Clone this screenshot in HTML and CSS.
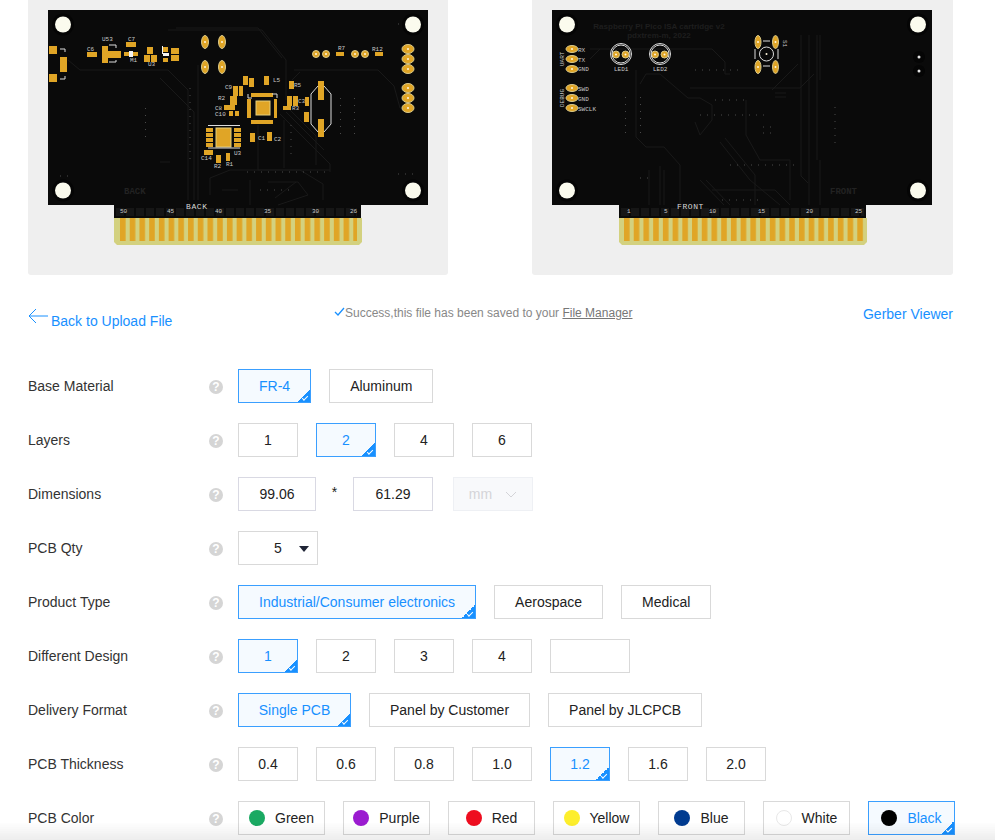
FILE: index.html
```html
<!DOCTYPE html>
<html lang="en">
<head>
  <meta charset="UTF-8">
  <title>PCB Quote</title>
  <link rel="stylesheet" href="styles.css">
</head>
<body>
  <div class="previews">
    <div class="preview">
      <svg class="pcb" viewBox="28 0 420 275" width="420" height="275">
        <defs>
          <pattern id="fingers-back" x="120" y="0" width="9.72" height="40" patternUnits="userSpaceOnUse">
            <rect x="0" y="0" width="5.6" height="40" class="gold"/>
          </pattern>
        </defs>
        <path class="board" d="M48 10H428V205H361V218H114V205H48Z"/>
        <path class="finger-base" d="M114 218H362V242L359 245H117L114 242Z"/>
        <rect x="120" y="218" width="237" height="23" fill="url(#fingers-back)"/>
        <path class="stripe" d="M116 212H357"/>

        <g class="trace">
          <path d="M68 60L80 70H168L188 90V200"/>
          <path d="M160 78L194 112V200"/>
          <path d="M198 65V200"/>
          <path d="M168 30H262L286 60V100"/>
          <path d="M176 28H258L282 58"/>
          <path d="M280 114L330 164V172"/>
          <path d="M286 112L324 150"/>
          <path d="M290 110L316 136V165"/>
          <path d="M258 125V170H330"/>
          <path d="M284 120V168"/>
          <path d="M300 72L292 80M294 70H378L394 86L400 108H408"/>
          <path d="M210 195V178L230 170H300L323 184V200"/>
          <path d="M268 182H298L308 195L278 205"/>
          <path d="M275 198L296 182"/>
          <path d="M250 205V180"/>
          <path d="M160 162H170M222 190H238"/>
        </g>
        <g class="vias">
          <path d="M145.500 108V142"/>
          <path d="M340.500 98V138"/>
          <path d="M354.500 98V138"/>
          <path d="M190 88V160"/>
          <path d="M247 172H330"/>
          <path d="M291 125V160"/>
          <path d="M60 176H74M60 190H74"/>
          <path d="M398 24H402M398 174H418"/>
          <path d="M260 190H290"/>
        </g>

        <g class="gold">
          <rect x="49" y="46" width="8" height="8"/>
          <rect x="49" y="74" width="8" height="8"/>
          <rect x="60" y="57" width="7" height="15"/>
          <rect x="87" y="52" width="10" height="5"/>
          <rect x="102" y="46" width="6" height="5"/>
          <rect x="102" y="58" width="6" height="5"/>
          <rect x="102" y="51" width="19" height="7"/>
          <rect x="126" y="42" width="10" height="5"/>
          <rect x="124" y="52" width="14" height="4"/>
          <rect x="147" y="47" width="6" height="7"/>
          <rect x="144" y="55" width="6" height="7"/>
          <rect x="151" y="55" width="6" height="7"/>
          <rect x="163" y="47" width="5" height="5"/>
          <rect x="163" y="58" width="5" height="4"/>
          <rect x="171" y="48" width="8" height="6"/>
          <rect x="171" y="55" width="8" height="6"/>
          <rect x="336" y="52" width="8" height="4"/>
          <rect x="375" y="52" width="8" height="4"/>

          <rect x="243" y="76" width="5" height="9"/>
          <rect x="249" y="78" width="5" height="9"/>
          <rect x="264" y="76" width="5" height="9"/>
          <rect x="289" y="81" width="5" height="8"/>
          <rect x="233" y="86" width="5" height="10"/>
          <rect x="239" y="86" width="4" height="10"/>
          <rect x="230" y="96" width="7" height="9"/>
          <rect x="229" y="105" width="6" height="5"/>
          <rect x="224" y="105" width="5" height="5"/>
          <rect x="229" y="111" width="4" height="5"/>
          <rect x="235" y="111" width="4" height="5"/>

          <rect x="251" y="93" width="22" height="4"/>
          <rect x="251" y="120" width="22" height="4"/>
          <rect x="247" y="99" width="4" height="19"/>
          <rect x="274" y="99" width="3" height="19"/>
          <rect x="256" y="101" width="14" height="14" class="pad-edge"/>

          <rect x="216" y="128" width="15" height="19" class="pad-edge"/>
          <rect x="206" y="128" width="7" height="4"/>
          <rect x="206" y="133" width="7" height="4"/>
          <rect x="206" y="138" width="7" height="4"/>
          <rect x="206" y="143" width="7" height="4"/>
          <rect x="234" y="128" width="7" height="4"/>
          <rect x="234" y="133" width="7" height="4"/>
          <rect x="234" y="138" width="7" height="4"/>
          <rect x="234" y="143" width="7" height="4"/>

          <rect x="250" y="133" width="5" height="9"/>
          <rect x="267" y="132" width="5" height="9"/>
          <rect x="204" y="150" width="9" height="5"/>
          <rect x="216" y="155" width="5" height="8"/>
          <rect x="226" y="153" width="4" height="8"/>
          <rect x="287" y="96" width="5" height="10"/>
          <rect x="293" y="96" width="5" height="10"/>
          <rect x="283" y="106" width="8" height="4"/>
          <rect x="305" y="97" width="4" height="9"/>
          <rect x="304" y="112" width="5" height="10"/>
          <rect x="318" y="81" width="6" height="19"/>
          <rect x="318" y="119" width="6" height="18"/>
        </g>

        <g class="pin">
          <ellipse cx="205" cy="42" rx="3.500" ry="6.500"/>
          <ellipse cx="222" cy="42" rx="3.500" ry="6.500"/>
          <ellipse cx="205" cy="67" rx="3.500" ry="6.500"/>
          <ellipse cx="222" cy="67" rx="3.500" ry="6.500"/>
          <circle cx="316" cy="54" r="3.500"/>
          <circle cx="326" cy="54" r="3.500"/>
          <circle cx="355" cy="54" r="3.500"/>
          <circle cx="365" cy="54" r="3.500"/>
          <ellipse cx="408" cy="49" rx="6" ry="4.500"/>
          <ellipse cx="408" cy="59" rx="6" ry="4.500"/>
          <ellipse cx="408" cy="69" rx="6" ry="4.500"/>
          <ellipse cx="408" cy="88" rx="6" ry="4.500"/>
          <ellipse cx="408" cy="98" rx="6" ry="4.500"/>
          <ellipse cx="408" cy="108" rx="6" ry="4.500"/>
        </g>
        <g class="drill">
          <circle cx="205" cy="42" r="1"/><circle cx="222" cy="42" r="1"/>
          <circle cx="205" cy="67" r="1"/><circle cx="222" cy="67" r="1"/>
          <circle cx="316" cy="54" r="1"/><circle cx="326" cy="54" r="1"/>
          <circle cx="355" cy="54" r="1"/><circle cx="365" cy="54" r="1"/>
          <circle cx="408" cy="49" r="1"/><circle cx="408" cy="59" r="1"/>
          <circle cx="408" cy="69" r="1"/><circle cx="408" cy="88" r="1"/>
          <circle cx="408" cy="98" r="1"/><circle cx="408" cy="108" r="1"/>
        </g>

        <g class="outline">
          <path d="M60 49H65V52M60 79H65V76"/>
          <path d="M109 45H116V48M109 62H116V60"/>
          <path d="M208 125.500H240M208 148H240"/>
          <path d="M252 98H248V94M272 94H277V98"/>
          <path d="M318 86L311 94V124L318 132M324 86L331 94V124L324 132"/>
        </g>
        <rect x="129" y="51" width="4" height="6" class="silk-block"/>
        <rect x="163" y="53" width="6" height="3" class="silk-block"/>
        <rect x="162" y="46" width="1" height="8" class="silk-block"/>

        <g class="holes">
          <circle cx="63" cy="24.500" r="11" class="halo"/><circle cx="63" cy="24.500" r="8"/>
          <circle cx="413" cy="24.500" r="11" class="halo"/><circle cx="413" cy="24.500" r="8"/>
          <circle cx="63" cy="190.500" r="11" class="halo"/><circle cx="63" cy="190.500" r="8"/>
          <circle cx="413" cy="190.500" r="11" class="halo"/><circle cx="413" cy="190.500" r="8"/>
        </g>

        <g class="silk">
          <text x="102" y="41">U53</text>
          <text x="87" y="51">C6</text>
          <text x="128" y="41">C7</text>
          <text x="130" y="62">M1</text>
          <text x="148" y="66">U3</text>
          <text x="338" y="50">R7</text>
          <text x="372" y="51">R12</text>
          <text x="273" y="82">L5</text>
          <text x="294" y="87">R5</text>
          <text x="292" y="110">R3</text>
          <text x="298" y="103">C3</text>
          <text x="225" y="89">C9</text>
          <text x="218" y="100">R2</text>
          <text x="215" y="110">C8</text>
          <text x="215" y="116">C10</text>
          <text x="258" y="140">C1</text>
          <text x="274" y="141">C2</text>
          <text x="201" y="160">C14</text>
          <text x="234" y="155">U3</text>
          <text x="214" y="168">R2</text>
          <text x="226" y="166">R1</text>
          <text x="120" y="213">50</text>
          <text x="167" y="213">45</text>
          <text x="215" y="213">40</text>
          <text x="264" y="213">35</text>
          <text x="312" y="213">30</text>
          <text x="350" y="213">26</text>
        </g>
        <text x="186" y="209" class="silk-large">BACK</text>
        <text x="124" y="194" class="silk-dark">BACK</text>
      </svg>
    </div>

    <div class="preview">
      <svg class="pcb" viewBox="532 0 421 275" width="421" height="275">
        <defs>
          <pattern id="fingers-front" x="624" y="0" width="9.72" height="40" patternUnits="userSpaceOnUse">
            <rect x="0" y="0" width="5.6" height="40" class="gold"/>
          </pattern>
        </defs>
        <path class="board" d="M552 10H932V205H866V218H619V205H552Z"/>
        <path class="finger-base" d="M619 218H867V242L864 245H622L619 242Z"/>
        <rect x="624" y="218" width="240" height="23" fill="url(#fingers-front)"/>
        <path class="stripe" d="M621 212H864"/>

        <g class="trace">
          <path d="M590 49H712L725 62V74H730"/>
          <path d="M590 59L600 49"/>
          <path d="M636 70V137L646 147H664L680 165V205"/>
          <path d="M640 84L646 74H660L688 98H700L712 105V120L700 135L695 122"/>
          <path d="M690 88H800L814 74"/>
          <path d="M772 90L798 64"/>
          <path d="M775 97H786M775 93H786"/>
          <path d="M801 35V176L808 183"/>
          <path d="M809 35V205"/>
          <path d="M817 35V160M820 160V205"/>
          <path d="M820 35V80"/>
          <path d="M649 170V205M660 166V205M664 170V205"/>
          <path d="M725 138L755 175V205"/>
          <path d="M720 142L750 180L780 205"/>
          <path d="M706 180L730 205M700 180L724 205"/>
          <path d="M712 190H775L790 205"/>
          <path d="M746 100V135L760 160H790V200"/>
        </g>
        <g class="vias">
          <path d="M625.500 97V138"/>
          <path d="M640.500 97V138"/>
          <path d="M835 107V143"/>
          <path d="M695 70H740"/>
          <path d="M700 115H770"/>
          <path d="M763 133H775M763 127H775"/>
          <path d="M715 100H745"/>
          <path d="M730 165H800"/>
          <path d="M640 178H650"/>
          <path d="M722 200H760"/>
        </g>

        <g class="pin">
          <ellipse cx="572" cy="49" rx="6" ry="3.500"/>
          <ellipse cx="572" cy="59" rx="6" ry="3.500"/>
          <ellipse cx="572" cy="69" rx="6" ry="3.500"/>
          <ellipse cx="572" cy="88" rx="6" ry="3.500"/>
          <ellipse cx="572" cy="98" rx="6" ry="3.500"/>
          <ellipse cx="572" cy="108" rx="6" ry="3.500"/>
          <circle cx="616" cy="54.500" r="3.500"/>
          <circle cx="625.500" cy="54.500" r="3.500"/>
          <circle cx="655" cy="54.500" r="3.500"/>
          <circle cx="664.500" cy="54.500" r="3.500"/>
          <ellipse cx="758" cy="42" rx="3" ry="6.500"/>
          <ellipse cx="775.500" cy="42" rx="3" ry="6.500"/>
          <ellipse cx="758" cy="67" rx="3" ry="6.500"/>
          <ellipse cx="775.500" cy="67" rx="3" ry="6.500"/>
        </g>
        <g class="drill">
          <circle cx="572" cy="49" r="1"/><circle cx="572" cy="59" r="1"/>
          <circle cx="572" cy="69" r="1"/><circle cx="572" cy="88" r="1"/>
          <circle cx="572" cy="98" r="1"/><circle cx="572" cy="108" r="1"/>
          <circle cx="616" cy="54.500" r="1"/><circle cx="625.500" cy="54.500" r="1"/>
          <circle cx="655" cy="54.500" r="1"/><circle cx="664.500" cy="54.500" r="1"/>
          <circle cx="758" cy="42" r="1"/><circle cx="775.500" cy="42" r="1"/>
          <circle cx="758" cy="67" r="1"/><circle cx="775.500" cy="67" r="1"/>
          <circle cx="766.500" cy="54" r="1"/>
        </g>
        <g class="outline">
          <circle cx="621" cy="54" r="10.500"/>
          <circle cx="621" cy="54" r="9"/>
          <circle cx="660" cy="54" r="10.500"/>
          <circle cx="660" cy="54" r="9"/>
          <circle cx="766.500" cy="54" r="7"/>
          <path d="M755 49V59M778 49V59M763 41H770M763 66H770"/>
        </g>

        <circle cx="919" cy="57" r="6" class="halo"/>
        <circle cx="919" cy="71" r="6" class="halo"/>
        <circle cx="919" cy="57" r="1.500" class="via-pin"/>
        <circle cx="919" cy="71" r="1.500" class="via-pin"/>

        <g class="holes">
          <circle cx="567" cy="24.500" r="11" class="halo"/><circle cx="567" cy="24.500" r="8"/>
          <circle cx="918" cy="24.500" r="11" class="halo"/><circle cx="918" cy="24.500" r="8"/>
          <circle cx="567" cy="190.500" r="11" class="halo"/><circle cx="567" cy="190.500" r="8"/>
          <circle cx="918" cy="190.500" r="11" class="halo"/><circle cx="918" cy="190.500" r="8"/>
        </g>

        <g class="silk">
          <text x="578" y="52">RX</text>
          <text x="578" y="62">TX</text>
          <text x="578" y="71">GND</text>
          <text x="578" y="91">SWD</text>
          <text x="578" y="101">GND</text>
          <text x="578" y="111">SWCLK</text>
          <text x="614" y="71">LED1</text>
          <text x="653" y="71">LED2</text>
          <text x="627" y="213">1</text>
          <text x="664" y="213">5</text>
          <text x="709" y="213">10</text>
          <text x="758" y="213">15</text>
          <text x="806" y="213">20</text>
          <text x="855" y="213">25</text>
          <text class="silk-up" transform="translate(564 66) rotate(-90)">UART</text>
          <text class="silk-up" transform="translate(564 107) rotate(-90)">DEBUG</text>
          <text class="silk-up" transform="translate(783 40) rotate(90)">S1</text>
        </g>
        <text x="677" y="209" class="silk-large">FRONT</text>
        <text x="830" y="194" class="silk-dark">FRONT</text>
        <text x="659" y="29" class="silk-title">Raspberry Pi Pico ISA cartridge v2</text>
        <text x="659" y="38" class="silk-title">pdxtrem-m, 2022</text>
      </svg>
    </div>
  </div>

  <div class="toolbar">
    <a class="back">
      <svg class="back-arrow" width="20" height="16" viewBox="0 0 20 16">
        <path d="M20 8H1M8 1L1 8L8 15"/>
      </svg>
      Back to Upload File
    </a>
    <div class="saved">
      <svg class="saved-check" width="11" height="10" viewBox="0 0 11 10">
        <path d="M1 5L4 8L10 1"/>
      </svg>
      <span>Success,this file has been saved to your <u>File Manager</u></span>
    </div>
    <a class="gerber">Gerber Viewer</a>
  </div>

  <form class="options">
    <div class="row">
      <div class="label">Base Material</div><span class="help">?</span>
      <div class="choices">
        <div class="opt selected">FR-4</div>
        <div class="opt">Aluminum</div>
      </div>
    </div>
    <div class="row">
      <div class="label">Layers</div><span class="help">?</span>
      <div class="choices">
        <div class="opt num">1</div>
        <div class="opt num selected">2</div>
        <div class="opt num">4</div>
        <div class="opt num">6</div>
      </div>
    </div>
    <div class="row">
      <div class="label">Dimensions</div><span class="help">?</span>
      <input class="dim" type="text" value="99.06">
      <span class="times">*</span>
      <input class="dim dim-last" type="text" value="61.29">
      <div class="unit">mm
        <svg width="12" height="7" viewBox="0 0 12 7"><path d="M1 1L6 6L11 1"/></svg>
      </div>
    </div>
    <div class="row">
      <div class="label">PCB Qty</div><span class="help">?</span>
      <div class="qty">5<span class="caret"></span></div>
    </div>
    <div class="row">
      <div class="label">Product Type</div><span class="help">?</span>
      <div class="choices">
        <div class="opt selected">Industrial/Consumer electronics</div>
        <div class="opt">Aerospace</div>
        <div class="opt">Medical</div>
      </div>
    </div>
    <div class="row">
      <div class="label">Different Design</div><span class="help">?</span>
      <div class="choices">
        <div class="opt num selected">1</div>
        <div class="opt num">2</div>
        <div class="opt num">3</div>
        <div class="opt num">4</div>
        <div class="opt blank"></div>
      </div>
    </div>
    <div class="row">
      <div class="label">Delivery Format</div><span class="help">?</span>
      <div class="choices">
        <div class="opt single selected">Single PCB</div>
        <div class="opt">Panel by Customer</div>
        <div class="opt">Panel by JLCPCB</div>
      </div>
    </div>
    <div class="row">
      <div class="label">PCB Thickness</div><span class="help">?</span>
      <div class="choices">
        <div class="opt num">0.4</div>
        <div class="opt num">0.6</div>
        <div class="opt num">0.8</div>
        <div class="opt num">1.0</div>
        <div class="opt num selected">1.2</div>
        <div class="opt num">1.6</div>
        <div class="opt num">2.0</div>
      </div>
    </div>
    <div class="row">
      <div class="label">PCB Color</div><span class="help">?</span>
      <div class="choices">
        <div class="opt color"><i class="dot green"></i>Green</div>
        <div class="opt color"><i class="dot purple"></i>Purple</div>
        <div class="opt color"><i class="dot red"></i>Red</div>
        <div class="opt color"><i class="dot yellow"></i>Yellow</div>
        <div class="opt color"><i class="dot blue"></i>Blue</div>
        <div class="opt color"><i class="dot white"></i>White</div>
        <div class="opt color selected"><i class="dot black"></i>Black</div>
      </div>
    </div>
  </form>

  <div class="fade"></div>
</body>
</html>
```

FILE: styles.css
```css
html, body {
  margin: 0;
  padding: 0;
  height: 840px;
  overflow: hidden;
}

body {
  background: #fff;
  color: #333;
  font-family: "Liberation Sans", Arial, sans-serif;
  font-size: 14px;
}

/* board previews */
.previews {
  display: flex;
  justify-content: space-between;
  padding: 0 42px 0 28px;
}

.preview {
  height: 275px;
  background: #efefef;
  border-radius: 0 0 3px 3px;
}

.pcb {
  display: block;
}

.board { fill: #0a0a0a; }
.finger-base { fill: #d3d17f; }
.stripe { stroke: #161616; stroke-width: 8; stroke-dasharray: 8 2; fill: none; }
.gold { fill: #e0a526; }
.pad-edge { stroke: #e6cf7c; stroke-width: 1; }
.trace path { fill: none; stroke: #191919; stroke-width: 1; }
.vias path { fill: none; stroke: #4a4a4a; stroke-width: 1; stroke-dasharray: 1 6; }
.pin { fill: #e0a526; stroke: #d9c98a; stroke-width: 1; }
.drill { fill: #fff6dc; }
.outline path, .outline circle { fill: none; stroke: #dcdcdc; stroke-width: 1; }
.silk-block { fill: #f4f4f4; }
.holes { fill: #fbfbee; }
.holes .halo, .halo { fill: #050505; }
.via-pin { fill: #e4e4e4; }

.silk text {
  fill: #c9c9c9;
  font-family: "Liberation Mono", monospace;
  font-size: 6px;
}

.silk-large {
  fill: #d8d8d8;
  font-family: "Liberation Mono", monospace;
  font-size: 8px;
  letter-spacing: 0.6px;
}

.silk-dark {
  fill: #222;
  font-family: "Liberation Mono", monospace;
  font-size: 9px;
  font-weight: bold;
}

.silk-title {
  fill: #1e1e1e;
  font-family: "Liberation Sans", sans-serif;
  font-size: 8px;
  font-weight: bold;
  text-anchor: middle;
}

/* links row */
.toolbar {
  display: flex;
  align-items: flex-start;
  height: 30px;
  margin: 30px 0 34px;
  padding: 0 42px 0 28px;
}

.back {
  position: relative;
  width: 306px;
  padding: 8px 0 0 23px;
  box-sizing: border-box;
  color: #1890ff;
  line-height: 16px;
}

.back-arrow {
  position: absolute;
  left: 0;
  top: 3px;
}

.back-arrow path {
  fill: none;
  stroke: #1890ff;
  stroke-width: 1;
}

.saved {
  flex: 1;
  display: flex;
  align-items: center;
  color: #888;
  font-size: 12px;
  line-height: 16px;
}

.saved u {
  color: #777;
}

.saved-check {
  margin-top: -2px;
}

.saved-check path {
  fill: none;
  stroke: #1890ff;
  stroke-width: 1.3;
}

.gerber {
  color: #1890ff;
  line-height: 18px;
}

/* option rows */
.options {
  padding: 0 28px;
  margin: 0;
}

.row {
  display: flex;
  align-items: center;
  height: 34px;
  margin-bottom: 20px;
}

.label {
  width: 181px;
  color: #333;
}

.help {
  display: block;
  width: 14px;
  height: 14px;
  margin: 2px 15px 0 0;
  border-radius: 50%;
  background: #d5d5d5;
  color: #fff;
  font-size: 12px;
  font-weight: bold;
  line-height: 14px;
  text-align: center;
}

.choices {
  display: flex;
  gap: 18px;
}

.opt {
  position: relative;
  display: flex;
  align-items: center;
  justify-content: center;
  height: 34px;
  padding: 0 20px;
  box-sizing: border-box;
  background: #fff;
  border: 1px solid #d9d9d9;
  color: #222;
  white-space: nowrap;
}

.num {
  width: 60px;
  padding: 0;
}

.blank {
  width: 80px;
  padding: 0;
}

.single {
  width: 113px;
  padding: 0;
}

.color {
  width: 87px;
  padding: 0;
  gap: 10px;
}

.selected {
  background: #f5faff;
  border-color: #3a9fff;
  color: #1890ff;
}

.selected::after {
  content: "";
  position: absolute;
  right: 0;
  bottom: 0;
  width: 13px;
  height: 13px;
  background: linear-gradient(135deg, transparent 50%, #1890ff 50%);
}

.selected::before {
  content: "";
  position: absolute;
  right: 2px;
  bottom: 3px;
  z-index: 1;
  width: 5px;
  height: 2px;
  border-left: 1px solid #fff;
  border-bottom: 1px solid #fff;
  transform: rotate(-45deg);
}

.dot {
  display: block;
  width: 16px;
  height: 16px;
  border-radius: 50%;
  box-sizing: border-box;
}

.green { background: #1aa962; }
.purple { background: #9b1bd0; }
.red { background: #ee0d1f; }
.yellow { background: #fdee2c; }
.blue { background: #003b90; }
.white { background: #fff; border: 1px solid #e8e8e8; }
.black { background: #000; }

.dim {
  width: 78px;
  height: 34px;
  padding: 0;
  box-sizing: border-box;
  border: 1px solid #d9d9e3;
  color: #222;
  font: 14px "Liberation Sans", Arial, sans-serif;
  text-align: center;
  outline: none;
}

.dim-last {
  width: 80px;
  margin-right: 20px;
}

.times {
  width: 37px;
  margin-top: -4px;
  color: #222;
  text-align: center;
}

.unit {
  display: flex;
  align-items: center;
  justify-content: center;
  gap: 13px;
  width: 80px;
  height: 34px;
  box-sizing: border-box;
  background: #f8f9fb;
  border: 1px solid #eef0f4;
  color: #d4d4d8;
}

.unit svg path {
  fill: none;
  stroke: #d4d4d8;
  stroke-width: 1;
}

.qty {
  position: relative;
  display: flex;
  align-items: center;
  width: 80px;
  height: 34px;
  padding-left: 35px;
  box-sizing: border-box;
  border: 1px solid #d9d9d9;
  color: #222;
}

.caret {
  position: absolute;
  right: 8px;
  top: 14px;
  width: 0;
  height: 0;
  border-left: 5px solid transparent;
  border-right: 5px solid transparent;
  border-top: 6px solid #1f2436;
}

.fade {
  position: fixed;
  left: 0;
  right: 0;
  bottom: 0;
  height: 18px;
  background: linear-gradient(rgba(0, 0, 0, 0), rgba(0, 0, 0, 0.07));
  pointer-events: none;
}
```
